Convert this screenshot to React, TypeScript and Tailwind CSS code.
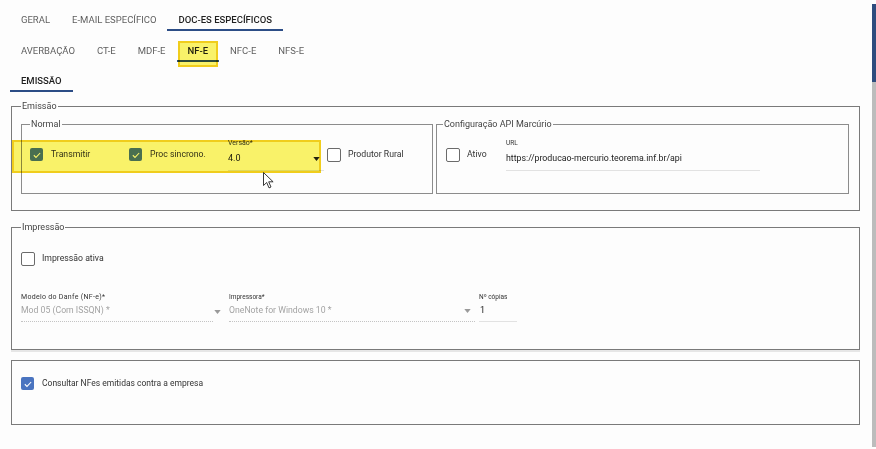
import React from "react";

type TabProps = { label: string; active?: boolean; mark?: boolean };

function Tab({ label, active, mark }: TabProps) {
  return (
    <div
      className={`relative flex h-[22px] items-center px-[11px] text-[9.5px] uppercase ${
        active ? "border-b-2 border-[#2c4d86] pt-[2px] font-medium text-[#1f1f1f]" : "text-[#5f5f5f]"
      }`}
    >
      {label}
      {mark && (
        <span className="pointer-events-none absolute left-[1px] right-[1px] top-[1px] bottom-[-7px] border-2 border-[#f2cf1c] bg-[#fbf46a] mix-blend-multiply" />
      )}
    </div>
  );
}

function Check({ checked }: { checked?: boolean }) {
  if (checked) {
    return (
      <span className="flex h-[13px] w-[13px] shrink-0 items-center justify-center rounded-[2px] bg-[#4a74c0]">
        <svg viewBox="0 0 12 12" className="h-[10px] w-[10px]">
          <path d="M2.2 6.3l2.6 2.6L9.8 3.6" stroke="#fff" strokeWidth="1.3" fill="none" />
        </svg>
      </span>
    );
  }
  return <span className="h-[14px] w-[14px] shrink-0 rounded-[2px] border-[1.5px] border-[#6b6b6b] bg-white" />;
}

function Arrow({ color = "#222" }: { color?: string }) {
  return (
    <svg viewBox="0 0 8 5" className="h-[4px] w-[7px] shrink-0">
      <path d="M0 0h8L4 5z" fill={color} />
    </svg>
  );
}

function Legend({ children, className = "" }: { children: React.ReactNode; className?: string }) {
  return <legend className={`px-[1px] text-[9px] leading-[12px] text-[#444] ${className}`}>{children}</legend>;
}

export default function App() {
  return (
    <div className="flex h-[449px] w-[876px] overflow-hidden bg-[#fdfdfd] font-['Roboto','Liberation_Sans',sans-serif]">
      <div className="relative flex w-[872px] flex-col">
        {/* abas */}
        <div className="mt-[9px] flex pl-[10px]">
          <Tab label="Geral" />
          <Tab label="E-mail específico" />
          <Tab label="Doc-es específicos" active />
        </div>
        <div className="mt-[9px] flex pl-[10px]">
          <Tab label="Averbação" />
          <Tab label="CT-e" />
          <Tab label="MDF-e" />
          <Tab label="NF-e" active mark />
          <Tab label="NFC-e" />
          <Tab label="NFS-e" />
        </div>
        <div className="mt-[8px] flex pl-[10px]">
          <Tab label="Emissão" active />
        </div>

        <div className="flex flex-col pl-[11px] pr-[12px]">
          {/* Emissão */}
          <fieldset className="mt-[8px] border border-[#7a7a7a] pb-[16px] pl-[9px] pr-[10px]">
            <Legend>Emissão</Legend>
            <div className="mt-[6px] flex gap-[3px]">
              <fieldset className="flex-1 border border-[#8c8c8c] pb-[22px] pl-[8px]">
                <Legend>Normal</Legend>
                <div className="relative mt-[9px] flex h-[32px] items-center">
                  <div className="flex w-[99px] items-center gap-[8px] text-[8.7px] text-[#333]">
                    <Check checked />
                    Transmitir
                  </div>
                  <div className="flex w-[99px] items-center gap-[8px] text-[8.7px] text-[#333]">
                    <Check checked />
                    Proc sincrono.
                  </div>
                  <div className="flex h-[32px] w-[96px] flex-col">
                    <span className="text-[7px] leading-[8px] text-[#333]">Versão*</span>
                    <div className="flex h-[24px] items-center justify-between border-b border-[#e2e2e2] pr-[4px] text-[9px] text-[#222]">
                      4.0
                      <Arrow />
                    </div>
                  </div>
                  <div className="ml-[3px] flex items-center gap-[7px] text-[8.7px] text-[#333]">
                    <Check />
                    Produtor Rural
                  </div>
                  <span className="pointer-events-none absolute left-[-18px] top-[1px] h-[33px] w-[309px] border-2 border-[#f2cf1c] bg-[#fbf46a] mix-blend-multiply" />
                  <svg viewBox="0 0 11 17" className="absolute left-[233px] top-[33px] h-[17px] w-[11px]">
                    <path d="M0.5 0.5v13l3.2-3 2.3 5.4 2-0.9-2.3-5.2h4.4z" fill="#fff" stroke="#222" strokeWidth="0.9" />
                  </svg>
                </div>
              </fieldset>
              <fieldset className="flex-1 border border-[#8c8c8c] pb-[22px] pl-[9px]">
                <Legend className="ml-[-3px]">Configuração API Marcúrio</Legend>
                <div className="mt-[9px] flex h-[32px] items-center">
                  <div className="flex w-[60px] items-center gap-[7px] text-[8.7px] text-[#333]">
                    <Check />
                    Ativo
                  </div>
                  <div className="flex h-[32px] w-[254px] flex-col">
                    <span className="text-[6.5px] leading-[8px] text-[#333]">URL</span>
                    <div className="flex h-[24px] items-center border-b border-[#e2e2e2] text-[8.8px] text-[#222]">
                      https://producao-mercurio.teorema.inf.br/api
                    </div>
                  </div>
                </div>
              </fieldset>
            </div>
          </fieldset>

          {/* Impressão */}
          <fieldset className="mt-[10px] border border-[#7a7a7a] pb-[27px] pl-[9px] pr-[10px] shadow-[0_2px_0_#e6e6e6]">
            <Legend>Impressão</Legend>
            <div className="mt-[19px] flex h-[14px] items-center gap-[7px] text-[8.7px] text-[#333]">
              <Check />
              Impressão ativa
            </div>
            <div className="mt-[27px] flex">
              <div className="flex w-[200px] flex-col">
                <span className="text-[7px] leading-[8px] tracking-[0.3px] text-[#333]">Modelo do Danfe (NF-e)*</span>
                <div className="flex h-[21px] items-center justify-between text-[8.7px] text-[#a3a3a3]">
                  <span className="flex h-full w-[192px] items-center border-b border-dotted border-[#c4c4c4]">Mod 05 (Com ISSQN) *</span>
                  <Arrow color="#9a9a9a" />
                </div>
              </div>
              <div className="ml-[8px] flex w-[246px] flex-col">
                <span className="text-[6.5px] leading-[8px] text-[#333]">Impressora*</span>
                <div className="flex h-[21px] items-center justify-between border-b border-dotted border-[#c4c4c4] pr-[4px] text-[8.7px] text-[#a3a3a3]">
                  OneNote for Windows 10 *
                  <Arrow color="#9a9a9a" />
                </div>
              </div>
              <div className="ml-[4px] flex w-[38px] flex-col">
                <span className="text-[6.5px] leading-[8px] text-[#333]">Nº cópias</span>
                <div className="flex h-[21px] items-center border-b border-[#e2e2e2] pl-[1px] text-[9px] text-[#222]">1</div>
              </div>
            </div>
          </fieldset>

          {/* Consulta */}
          <div className="mt-[10px] h-[65px] border border-[#7a7a7a] pl-[9px] pt-[16px]">
            <div className="flex items-center gap-[8px] text-[8.5px] text-[#333]">
              <Check checked />
              Consultar NFes emitidas contra a empresa
            </div>
          </div>
        </div>
      </div>

      {/* barra de rolagem */}
      <div className="flex w-[4px] flex-col">
        <div className="h-[4px] bg-white" />
        <div className="h-[78px] bg-[#2e4c7e]" />
        <div className="flex-1 bg-[#bcbcbc]" />
        <div className="h-[2px] bg-white" />
      </div>
    </div>
  );
}
